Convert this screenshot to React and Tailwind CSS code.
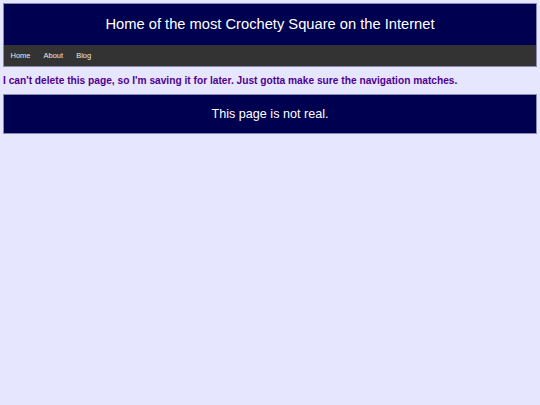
export default function App() {
  return (
    <div className="min-h-[405px] bg-[#e6e6ff] p-[3px] font-['Liberation_Sans',Arial,sans-serif]">
      <header className="border border-[#8a8ab0] bg-[#000050]">
        <h1 className="h-[41px] flex items-center justify-center text-[14.7px] text-white">
          Home of the most Crochety Square on the Internet
        </h1>
        <nav className="flex h-[21px] items-center bg-[#333333] text-[7.5px] text-[#e6e6e6]">
          <a className="px-[6.5px]">Home</a>
          <a className="px-[6.5px]">About</a>
          <a className="px-[6.5px]">Blog</a>
        </nav>
      </header>
      <p className="mt-[7px] mb-[6px] text-[10.2px] leading-[14px] font-bold text-[#500090]">
        I can't delete this page, so I'm saving it for later. Just gotta make sure the navigation matches.
      </p>
      <div className="flex h-[40px] items-center justify-center border border-[#8a8ab0] bg-[#000050] text-[12.6px] text-white">
        This page is not real.
      </div>
    </div>
  );
}
